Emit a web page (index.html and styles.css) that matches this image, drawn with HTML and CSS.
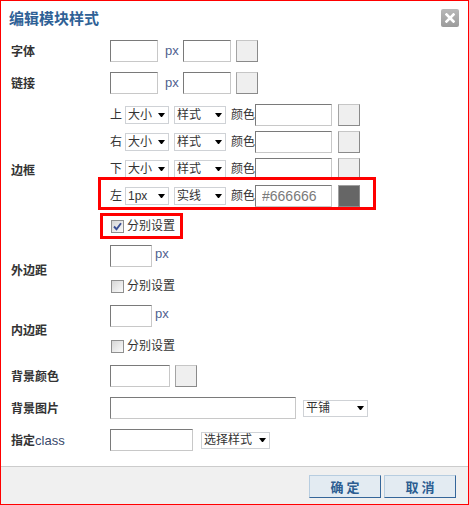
FILE: index.html
```html
<!DOCTYPE html>
<html lang="zh-CN">
<head>
<meta charset="utf-8">
<title>编辑模块样式</title>
<link rel="stylesheet" href="styles.css">
</head>
<body>
<div class="dialog">
  <div class="titlebar">
    <h1 class="title">编辑模块样式</h1>
    <button class="close" type="button" aria-label="关闭">
      <svg width="10" height="10" viewBox="0 0 10 10"><path d="M1.5 1.5 L8.5 8.5 M8.5 1.5 L1.5 8.5" stroke="#fff" stroke-width="2.6" stroke-linecap="square"/></svg>
    </button>
  </div>

  <div class="form">
    <div class="field">
      <div class="label">字体</div>
      <div class="ctrl row">
        <input class="in w48" type="text">
        <span class="px px-a">px</span>
        <input class="in w48" type="text">
        <span class="swatch sw-gap5"></span>
      </div>
    </div>

    <div class="field">
      <div class="label">链接</div>
      <div class="ctrl row">
        <input class="in w48" type="text">
        <span class="px px-a">px</span>
        <input class="in w48" type="text">
        <span class="swatch sw-gap5"></span>
      </div>
    </div>

    <div class="field">
      <div class="label">边框</div>
      <div class="ctrl col">
        <div class="sides">
          <div class="row side-row">
            <span class="side">上</span>
            <span class="sel s44"><select><option>大小</option></select></span>
            <span class="sel s52 gap5"><select><option>样式</option></select></span>
            <span class="clr">颜色</span>
            <input class="in w77" type="text">
            <span class="swatch sw-gap6"></span>
          </div>
          <div class="row side-row">
            <span class="side">右</span>
            <span class="sel s44"><select><option>大小</option></select></span>
            <span class="sel s52 gap5"><select><option>样式</option></select></span>
            <span class="clr">颜色</span>
            <input class="in w77" type="text">
            <span class="swatch sw-gap6"></span>
          </div>
          <div class="row side-row">
            <span class="side">下</span>
            <span class="sel s44"><select><option>大小</option></select></span>
            <span class="sel s52 gap5"><select><option>样式</option></select></span>
            <span class="clr">颜色</span>
            <input class="in w77" type="text">
            <span class="swatch sw-gap6"></span>
          </div>
          <div class="row side-row mark mark-row">
            <span class="side">左</span>
            <span class="sel s44"><select><option>1px</option></select></span>
            <span class="sel s52 gap5"><select><option>实线</option></select></span>
            <span class="clr">颜色</span>
            <input class="in w77 hex" type="text" value="#666666">
            <span class="swatch sw-gap6 dark"></span>
          </div>
        </div>
        <label class="row cbrow mark mark-cb">
          <span class="cb"><svg width="11" height="11" viewBox="0 0 11 11"><path d="M2 5.5 L4.5 8.2 L9 2.2" fill="none" stroke="#3a4f94" stroke-width="1.9"/></svg></span>
          <span>分别设置</span>
        </label>
      </div>
    </div>

    <div class="field">
      <div class="label">外边距</div>
      <div class="ctrl col">
        <div class="row">
          <input class="in w42" type="text">
          <span class="px px-b">px</span>
        </div>
        <label class="row cbrow">
          <span class="cb"></span>
          <span>分别设置</span>
        </label>
      </div>
    </div>

    <div class="field">
      <div class="label">内边距</div>
      <div class="ctrl col">
        <div class="row">
          <input class="in w42" type="text">
          <span class="px px-b">px</span>
        </div>
        <label class="row cbrow">
          <span class="cb"></span>
          <span>分别设置</span>
        </label>
      </div>
    </div>

    <div class="field">
      <div class="label">背景颜色</div>
      <div class="ctrl row">
        <input class="in w60" type="text">
        <span class="swatch sw-gap5"></span>
      </div>
    </div>

    <div class="field">
      <div class="label">背景图片</div>
      <div class="ctrl row">
        <input class="in w186" type="text">
        <span class="sel s65 gap7 low"><select><option>平铺</option></select></span>
      </div>
    </div>

    <div class="field">
      <div class="label">指定<span class="latin">class</span></div>
      <div class="ctrl row">
        <input class="in w83" type="text">
        <span class="sel s69 gap8 low"><select><option>选择样式</option></select></span>
      </div>
    </div>
  </div>

  <div class="footer">
    <button class="btn" type="button">确 定</button>
    <button class="btn" type="button">取 消</button>
  </div>
</div>
</body>
</html>
```

FILE: styles.css
```css
*,
*::before,
*::after {
  box-sizing: border-box;
}

body {
  margin: 0;
  font-family: "Liberation Sans", "Noto Sans CJK SC", sans-serif;
  font-size: 12px;
  color: #333;
  background: #fff;
}

.dialog {
  width: 469px;
  height: 505px;
  border: 1px solid #ff0000;
  display: flex;
  flex-direction: column;
  background: #fff;
}

.titlebar {
  height: 33px;
  display: flex;
  align-items: center;
  justify-content: space-between;
  padding: 0 9px 0 8px;
}

.title {
  margin: 0;
  font-family: "Noto Sans CJK SC", sans-serif;
  font-size: 15px;
  font-weight: bold;
  line-height: 20px;
  color: #2f6196;
}

.close {
  width: 18px;
  height: 18px;
  padding: 0;
  border: 0;
  border-radius: 2px;
  background: linear-gradient(#b9b9b9, #9b9b9b);
  display: flex;
  align-items: center;
  justify-content: center;
}

.form {
  flex: 1;
  padding: 6px 0 0 10px;
  display: flex;
  flex-direction: column;
  gap: 10px;
}

.field {
  display: flex;
  align-items: center;
}

.label {
  width: 99px;
  flex: none;
  font-family: "Noto Sans CJK SC", sans-serif;
  font-size: 12px;
  font-weight: bold;
  line-height: 16px;
  color: #333;
}

.label .latin {
  font-family: "Liberation Sans", sans-serif;
  font-size: 13px;
  font-weight: normal;
  color: #38486a;
}

.ctrl.col {
  display: flex;
  flex-direction: column;
  align-items: flex-start;
  gap: 10px;
}

.row {
  display: flex;
  align-items: center;
  width: fit-content;
}

.sides {
  display: flex;
  flex-direction: column;
  gap: 5px;
}

.side-row {
  height: 22px;
}

.side {
  width: 12px;
  margin-right: 3px;
  line-height: 16px;
}

.clr {
  margin-left: 5px;
  width: 24px;
  line-height: 16px;
}

/* text inputs */
.in {
  height: 22px;
  margin: 0;
  padding: 0 4px;
  border: 1px solid;
  border-color: #7a7a7a #c8c8c8 #c8c8c8 #7a7a7a;
  background: #fff;
  font: 12px "Liberation Sans", "Noto Sans CJK SC", sans-serif;
  color: #333;
  outline: none;
}

.in.hex {
  padding-left: 6px;
  font-size: 14px;
  color: #7a7a7a;
}

.w42 { width: 42px; }
.w48 { width: 48px; }
.w60 { width: 60px; }
.w77 { width: 77px; }
.w83 { width: 83px; }
.w186 { width: 186px; }

.px {
  font-family: "Liberation Sans", sans-serif;
  font-size: 13px;
  line-height: 16px;
  color: #4f5f8f;
}

.px-a {
  margin: 0 4px 0 7px;
}

.px-b {
  margin-left: 3px;
  margin-top: -4px;
}

/* color pickers */
.swatch {
  width: 22px;
  height: 22px;
  flex: none;
  border: 1px solid;
  border-color: #c6c6c6 #8a8a8a #8a8a8a #a4a4a4;
  background: #efefef;
}

.swatch.dark {
  background: #666;
  border-color: #a0a0a0 #8a8a8a #8a8a8a #a0a0a0;
}

.sw-gap5 { margin-left: 5px; }
.sw-gap6 { margin-left: 6px; }

/* selects */
.sel {
  position: relative;
  display: inline-block;
  height: 18px;
  flex: none;
}

.sel.low {
  height: 17px;
}

.sel select {
  -webkit-appearance: none;
  appearance: none;
  width: 100%;
  height: 100%;
  margin: 0;
  padding: 0 0 0 2px;
  border: 1px solid #cfd2d6;
  border-radius: 0;
  background: #fff;
  font: 12px "Liberation Sans", "Noto Sans CJK SC", sans-serif;
  color: #333;
  outline: none;
}

.sel::after {
  content: "";
  position: absolute;
  right: 4px;
  top: 50%;
  margin-top: -2px;
  width: 7px;
  height: 4px;
  border-left: 3.5px solid transparent;
  border-right: 3.5px solid transparent;
  border-top: 4px solid #000;
  pointer-events: none;
}

.s44 { width: 44px; }
.s52 { width: 52px; }
.s65 { width: 65px; }
.s69 { width: 69px; }
.gap5 { margin-left: 5px; }
.gap7 { margin-left: 7px; }
.gap8 { margin-left: 8px; }

/* checkboxes */
.cbrow {
  height: 18px;
  line-height: 16px;
}

.cb {
  width: 13px;
  height: 13px;
  margin: 0 3px 0 1px;
  border: 1px solid #8f8f8f;
  background: linear-gradient(135deg, #d6d6d6, #fbfbfb);
  display: inline-flex;
  align-items: center;
  justify-content: center;
}

/* red annotation boxes */
.mark {
  position: relative;
}

.mark::after {
  content: "";
  position: absolute;
  border: 3px solid #ff0000;
  pointer-events: none;
}

.mark-row::after {
  left: -12px;
  top: -8px;
  width: 278px;
  height: 33px;
}

.mark-cb::after {
  left: -10px;
  top: -4px;
  width: 83px;
  height: 26px;
}

/* footer */
.footer {
  height: 38px;
  flex: none;
  border-top: 1px solid #cccccc;
  background: #f0f0f0;
  display: flex;
  justify-content: flex-end;
  align-items: flex-start;
  gap: 3px;
  padding: 8px 12px 0 0;
}

.btn {
  width: 72px;
  height: 23px;
  margin: 0;
  padding: 0;
  border: 1px solid;
  border-color: #b7cde0 #35669a #35669a #b7cde0;
  background: #e3ebf2;
  font: bold 13px "Noto Sans CJK SC", sans-serif;
  color: #2c5d91;
  line-height: 20px;
}
```
